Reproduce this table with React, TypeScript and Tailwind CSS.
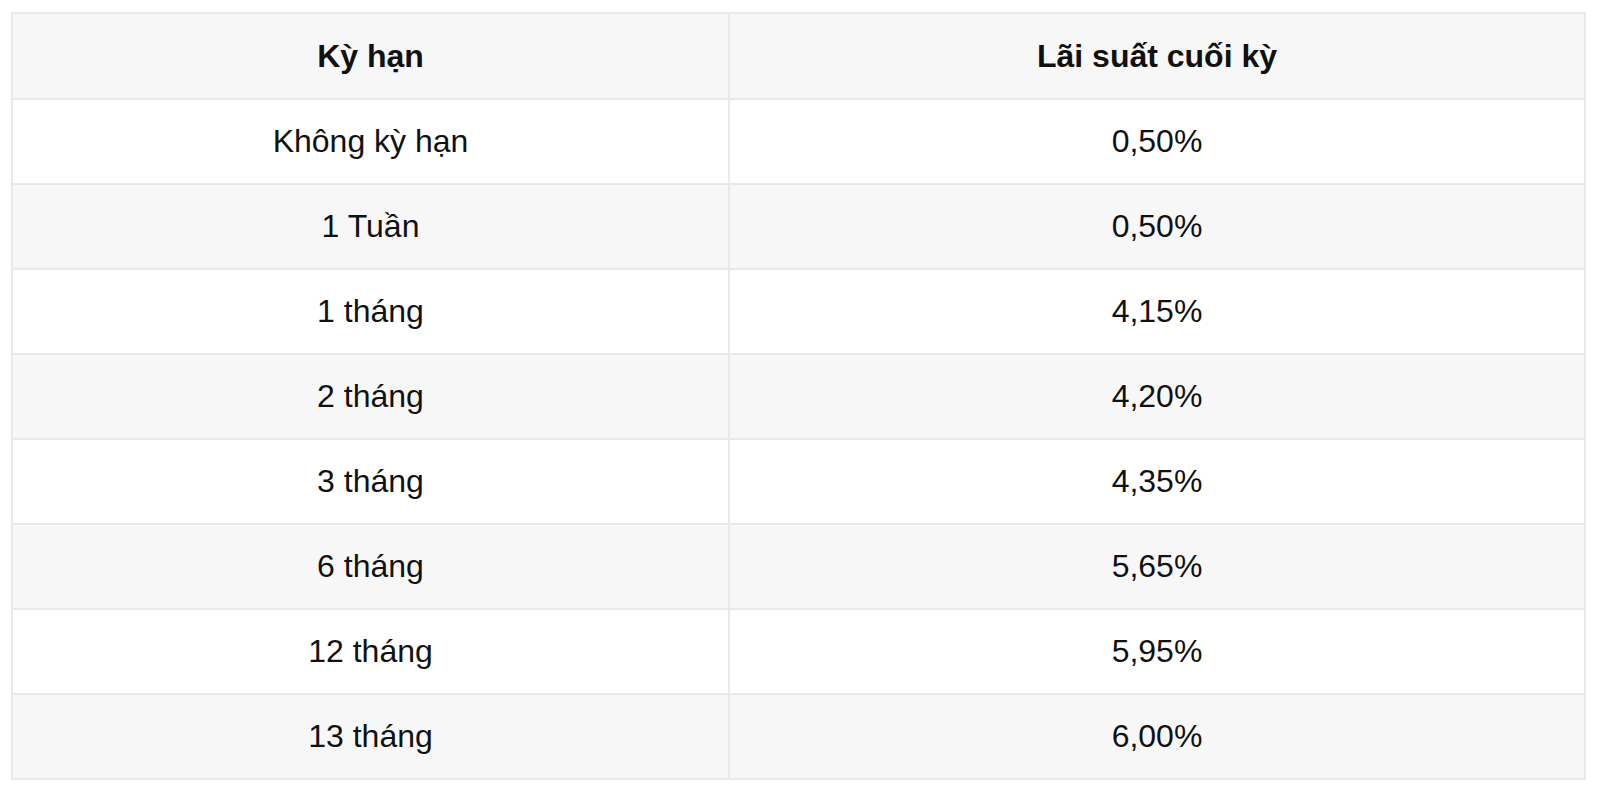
import React from "react";

const rows: [string, string][] = [
  ["Không kỳ hạn", "0,50%"],
  ["1 Tuần", "0,50%"],
  ["1 tháng", "4,15%"],
  ["2 tháng", "4,20%"],
  ["3 tháng", "4,35%"],
  ["6 tháng", "5,65%"],
  ["12 tháng", "5,95%"],
  ["13 tháng", "6,00%"],
];

export default function App() {
  return (
    <div
      className="w-[1600px] h-[795px] bg-white pt-[12px] pl-[11px]"
      style={{ fontFamily: '"Liberation Sans", Arial, sans-serif' }}
    >
      <div className="w-[1575px] border-2 border-[#e9e9e9] text-[32px] text-[#111111]">
        <div className="flex h-[84px] bg-[#f7f7f7] font-bold">
          <div className="w-[717px] flex items-center justify-center border-r-2 border-[#e9e9e9]">
            Kỳ hạn
          </div>
          <div className="flex-1 flex items-center justify-center">Lãi suất cuối kỳ</div>
        </div>
        {rows.map(([a, b], i) => (
          <div
            key={i}
            className={`flex h-[85px] border-t-2 border-[#e9e9e9] ${i % 2 === 0 ? "bg-white" : "bg-[#f7f7f7]"}`}
          >
            <div className="w-[717px] flex items-center justify-center border-r-2 border-[#e9e9e9] pb-[2px]">
              {a}
            </div>
            <div className="flex-1 flex items-center justify-center pb-[2px]">{b}</div>
          </div>
        ))}
      </div>
    </div>
  );
}
